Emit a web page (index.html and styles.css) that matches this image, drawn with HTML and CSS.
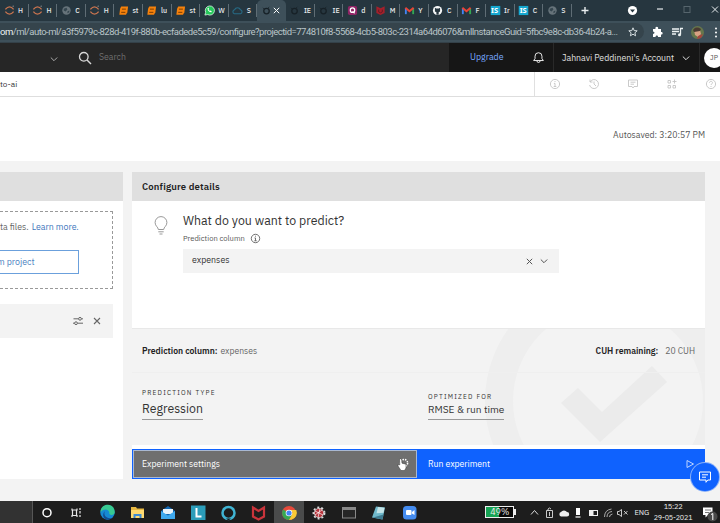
FILE: index.html
```
<!DOCTYPE html>
<html lang="en">
<head>
<meta charset="utf-8">
<title>AutoAI experiment</title>
<link rel="stylesheet" href="styles.css">
</head>
<body>
<svg class="defs" aria-hidden="true">
  <symbol id="jupyter" viewBox="0 0 12 12"><path d="M1.5 4.8Q6-.6 10.5 4.8M1.5 7.2Q6 12.6 10.5 7.2" fill="none" stroke="#c9744f" stroke-width="1.5"/><circle cx="10" cy="1.3" r=".7" fill="#999"/></symbol>
  <symbol id="globe" viewBox="0 0 12 12"><circle cx="6" cy="6" r="4.6" fill="#66737a"/><path d="M3 4l3-1 1 2-2 2-2-1zM7 7l2-1v2L7 9z" fill="#35464f"/></symbol>
  <symbol id="sheet" viewBox="0 0 12 12"><path d="M3.5 1.5h7.500l-.8 6.500-1.500 2.500H1.500L2.300 4z" fill="#f5810b"/><path d="M4.300 4.500h4.300M3.500 8h4.500" stroke="#713800" stroke-width="1"/></symbol>
  <symbol id="whatsapp" viewBox="0 0 12 12"><path d="M1 11l.8-3A5 5 0 1 1 4 10.4z" fill="#25c85b" stroke="#e7fff0" stroke-width=".8"/><path d="M4 3.4c-.8 2 2 5 4.1 4.4l.3-1-1.3-.7-.8.5L5 5l.4-.8L5 3z" fill="#fff"/></symbol>
  <symbol id="cloud" viewBox="0 0 12 12"><path d="M2.5 9.5a2.3 2.3 0 0 1 .3-4.4 3.5 3.5 0 0 1 6.4 0 2.3 2.3 0 0 1 .2 4.4z" fill="none" stroke="#276b86" stroke-width="1.2"/></symbol>
  <symbol id="dark" viewBox="0 0 12 12"><circle cx="6" cy="6.6" r="3" fill="none" stroke="#172127" stroke-width="1.4"/><path d="M2 3l1 1M9 2l-1 1" stroke="#172127"/></symbol>
  <symbol id="quora" viewBox="0 0 12 12"><rect x="1" y="1" width="10" height="10" rx="2" fill="#8f2465"/><circle cx="6" cy="5.6" r="2.4" fill="none" stroke="#fff" stroke-width="1.4"/><path d="M6 7l2.3 2" stroke="#fff" stroke-width="1.2"/></symbol>
  <symbol id="shield" viewBox="0 0 12 12"><path d="M1.5 1.3L6 3.6l4.5-2.3v7.3L6 11 1.5 8.600z" fill="#a3202b"/><path d="M4 5v2.500l2 1 2-1V5" fill="none" stroke="#5f1a22"/></symbol>
  <symbol id="gmail" viewBox="0 0 12 12"><path d="M2 10V3.500" stroke="#4285f4" stroke-width="2"/><path d="M10 10V3.500" stroke="#34a853" stroke-width="2"/><path d="M1.5 3L6 6.800 10.500 3" fill="none" stroke="#ea4335" stroke-width="2.200"/></symbol>
  <symbol id="github" viewBox="0 0 12 12"><circle cx="6" cy="6" r="5" fill="#f5f7f8"/><path d="M3.200 3l1.300.7h3L8.800 3v4L7.300 8v2.700H4.800V8L3.200 7z" fill="#26363f"/></symbol>
  <symbol id="is" viewBox="0 0 12 12"><rect x=".8" y="1" width="10.400" height="10" fill="#16a8d0"/></symbol>
  <symbol id="chev" viewBox="0 0 10 10"><path d="M1.800 3.500L5 6.700l3.200-3.200" fill="none" stroke="currentColor" stroke-width="1"/></symbol>
  <symbol id="x" viewBox="0 0 10 10"><path d="M2 2l6 6M8 2L2 8" fill="none" stroke="currentColor" stroke-width="1.100"/></symbol>
  <symbol id="info" viewBox="0 0 12 12"><circle cx="6" cy="6" r="4.600" fill="none" stroke="currentColor" stroke-width=".9"/><path d="M6 3v1M4.900 5.400H6v3M4.700 8.500h2.600" fill="none" stroke="currentColor" stroke-width=".9"/></symbol>
</svg>

<div class="tabs">
  <div class="tab"><svg><use href="#jupyter"/></svg><b>H</b></div>
  <div class="tab"><svg><use href="#jupyter"/></svg><b>H</b></div>
  <div class="tab"><svg><use href="#globe"/></svg><b>C</b></div>
  <div class="tab"><svg><use href="#jupyter"/></svg><b>H</b></div>
  <div class="tab"><svg><use href="#sheet"/></svg><b>st</b></div>
  <div class="tab"><svg><use href="#sheet"/></svg><b>lu</b></div>
  <div class="tab"><svg><use href="#sheet"/></svg><b>st</b></div>
  <div class="tab"><svg><use href="#whatsapp"/></svg><b>W</b></div>
  <div class="tab"><svg><use href="#cloud"/></svg><b>S</b></div>
  <div class="tab active"><svg><use href="#dark"/></svg><svg class="tab-x"><use href="#x"/></svg></div>
  <div class="tab"><svg><use href="#dark"/></svg><b>IE</b></div>
  <div class="tab"><svg><use href="#dark"/></svg><b>IE</b></div>
  <div class="tab"><svg><use href="#quora"/></svg><b>d</b></div>
  <div class="tab"><svg><use href="#shield"/></svg><b>M</b></div>
  <div class="tab"><svg><use href="#gmail"/></svg><b>Y</b></div>
  <div class="tab"><svg><use href="#github"/></svg><b>C</b></div>
  <div class="tab"><svg><use href="#gmail"/></svg><b>F</b></div>
  <div class="tab is"><svg><use href="#is"/></svg><i>IS</i><b>Ir</b></div>
  <div class="tab is"><svg><use href="#is"/></svg><i>IS</i><b>C</b></div>
  <div class="tab"><svg><use href="#globe"/></svg><b>S</b></div>
  <svg class="winctl" viewBox="0 0 148 20">
    <path d="M9.500 10.500h7M13 7v7" stroke="#e8edef" stroke-width="1.400"/>
    <circle cx="60.500" cy="10.500" r="4.600" fill="#fff"/><path d="M58 9.500h5l-2.500 3z" fill="#26363f"/>
    <path d="M85 9h6" stroke="#e8edef" stroke-width="1.200"/>
    <rect x="112" y="6.500" width="6" height="6" fill="none" stroke="#56656d"/>
    <path d="M140 6.500l6 6M146 6.500l-6 6" stroke="#e8edef"/>
  </svg>
</div>

<div class="toolbar">
  <div class="omnibox">
    <span class="url"><em>om</em>/ml/auto-ml/a3f5979c-828d-419f-880b-ecfadede5c59/configure?projectid=774810f8-5568-4cb5-803c-2314a64d6076&amp;mlInstanceGuid=5fbc9e8c-db36-4b24-a...</span>
    <svg class="star" viewBox="0 0 12 12"><path d="M6 1.800l1.200 2.800 3 .2-2.300 2 .7 3L6 8.200 3.400 9.800l.7-3-2.300-2 3-.2z" fill="none" stroke="#d5dde0"/></svg>
  </div>
  <svg class="exts" viewBox="0 0 76 20">
    <path d="M9 7h2.500c-.8-3 3.400-3 2.600 0H17v3c2.200-.6 2.200 3 0 2.500V15H14c.4-2-2.800-2-2.400 0H9v-3c2-.2 2-2.300 0-2.400z" fill="#fff"/>
    <path d="M28 7h7M28 9.500h7M28 12h4M36.500 6v6.500M36 6.500h3" stroke="#eef2f3" stroke-width="1.300"/><circle cx="35.500" cy="12.700" r="1.500" fill="#eef2f3"/>
    <circle cx="53.500" cy="10.500" r="6.500" fill="#66774c"/><path d="M50 8q3-5 6 0l1 4-3 3-3-2z" fill="#d8a183"/><path d="M49 8q3-5 8-1l-1 2-6 1z" fill="#493a32"/><path d="M54 14l5-2-2 4-4 1z" fill="#a7443d"/>
    <g fill="#fff"><circle cx="72" cy="6.500" r="1"/><circle cx="72" cy="10.500" r="1"/><circle cx="72" cy="14.500" r="1"/></g>
  </svg>
</div>

<header class="shell">
  <div class="shell-left">
    <svg class="ic10 shell-chev"><use href="#chev"/></svg>
    <svg class="mag" viewBox="0 0 14 14"><circle cx="5.800" cy="5.800" r="4.300" fill="none" stroke="#d8d8d8" stroke-width="1.300"/><path d="M9 9l4 4" stroke="#d8d8d8" stroke-width="1.400"/></svg>
    <span class="search">Search</span>
  </div>
  <div class="shell-right">
    <span class="upgrade">Upgrade</span>
    <svg class="bell" viewBox="0 0 12 12"><path d="M1.500 8.800L2.800 7V4.800a3.200 3.200 0 0 1 6.400 0V7l1.300 1.800zM4.600 9.200a1.400 1.400 0 0 0 2.800 0" fill="none" stroke="#eee" stroke-width=".9"/></svg>
    <div class="account"><span>Jahnavi Peddineni's Account</span><svg class="ic10"><use href="#chev"/></svg></div>
    <div class="avatar"><span>JP</span></div>
  </div>
</header>

<div class="crumbs">
  <span class="crumb">to-ai</span>
  <div class="crumb-icons">
    <svg><use href="#info"/></svg>
    <svg viewBox="0 0 12 12"><path d="M2 4a4.500 4.500 0 1 1-.4 3M2 1.500V4h2.500M6 3.500V6l2 2" fill="none" stroke="currentColor" stroke-width=".9"/></svg>
    <svg viewBox="0 0 12 12"><path d="M1.500 2h9v6.500H7L6 10 5 8.500H1.500zM3.500 4.200h5M3.500 6.200h3.500" fill="none" stroke="currentColor" stroke-width=".9"/></svg>
    <svg viewBox="0 0 12 12"><path d="M2 2.500h2.500V5H2zM2 7.500h2.500V10H2zM7 7.500h2.500V10H7zM8.500 1.500v4M6.500 3.500h4" fill="none" stroke="currentColor" stroke-width=".9"/></svg>
    <svg viewBox="0 0 12 12"><circle cx="6" cy="6" r="4.600" fill="none" stroke="currentColor" stroke-width=".9"/><path d="M4.500 4.800c0-2 3-2 3 0C7.500 6 6 5.800 6 7M6 8v1" fill="none" stroke="currentColor" stroke-width=".9"/></svg>
  </div>
</div>

<div class="saved"><span>Autosaved: 3:20:57 PM</span></div>

<main class="stage">
  <section class="source">
    <div class="card-head"></div>
    <div class="drop">
      <p><span>ta files.</span> <a>Learn more.</a></p>
      <div class="select-btn"><span>m project</span></div>
    </div>
    <div class="file">
      <svg viewBox="0 0 12 12"><path d="M1.500 3.800h5M9.500 3.800h1.500M1 8.200h1.500M5.500 8.200H11" stroke="currentColor"/><circle cx="8" cy="3.800" r="1.400" fill="none" stroke="currentColor"/><circle cx="4" cy="8.200" r="1.400" fill="none" stroke="currentColor"/></svg>
      <svg class="file-x"><use href="#x"/></svg>
    </div>
  </section>

  <section class="config">
    <div class="card-head"><h2>Configure details</h2></div>
    <div class="question">
      <svg class="bulb" viewBox="0 0 16 20"><path d="M5.300 13.500c0-2.400-3.200-3.300-3.200-7a5.900 5.900 0 0 1 11.800 0c0 3.700-3.200 4.600-3.200 7zM5.300 15.800h5.400M6.500 18h3" fill="none" stroke="#999" stroke-width="1"/></svg>
      <div class="q-body">
        <h3>What do you want to predict?</h3>
        <div class="label"><span>Prediction column</span><svg><use href="#info"/></svg></div>
        <div class="combo"><span>expenses</span><svg class="clear"><use href="#x"/></svg><svg><use href="#chev"/></svg></div>
      </div>
    </div>
    <div class="summary">
      <svg class="mark" viewBox="0 0 224 116"><circle cx="127" cy="72" r="109" fill="none" stroke="#eee" stroke-width="28"/><path d="M80 74L97 59l24 24 50-46 15 16-67 60z" fill="#ebebeb"/></svg>
      <div class="sum-row"><span><b>Prediction column:</b><i>expenses</i></span><span><b>CUH remaining:</b><i class="cuh-v">20 CUH</i></span></div>
      <div class="facts">
        <div><small>PREDICTION TYPE</small><strong class="type">Regression</strong></div>
        <div><small>OPTIMIZED FOR</small><strong class="metric">RMSE &amp; run time</strong></div>
      </div>
    </div>
    <div class="actions">
      <div class="settings"><span>Experiment settings</span>
        <svg viewBox="0 0 16 16"><circle cx="9" cy="7" r="3.600" fill="none" stroke="#fff" stroke-width="1.500" stroke-dasharray="1.500 1"/><path d="M4.500 3.500l1-.8 1 1 .5 3.500 4 1V12l-1.500 2.500H6L3 10V8.500l1.800.3z" fill="#fff" stroke="#333" stroke-width=".5"/></svg>
      </div>
      <div class="run"><span>Run experiment</span><svg viewBox="0 0 10 10"><path d="M2 1.500v7L8.500 5z" fill="none" stroke="#cfe0ff" stroke-width=".9"/></svg></div>
    </div>
  </section>
  <div class="chat"><svg viewBox="0 0 14 14"><path d="M1.500 2h11v8H9.800L8 12.300V10H1.500zM4 4.800h6M4 7.200h4" fill="none" stroke="#fff" stroke-width="1"/></svg></div>
</main>

<footer class="taskbar">
  <svg class="apps" viewBox="0 0 480 22">
    <rect width="32.500" height="22" fill="#323232"/><path d="M32.500 0v22" stroke="#777" stroke-width=".6"/>
    <circle cx="47" cy="11.700" r="4" fill="none" stroke="#fff" stroke-width="1.500"/>
    <path d="M72 7.500v1.500h5V7.500M72 16v-1.500h5V16M72.500 9v5M76.500 9v5M80 7v2M80 10v2.500M80 14v2" fill="none" stroke="#e8e8e8" stroke-width="1.200"/>
    <circle cx="107.500" cy="11.500" r="7.200" fill="#1689d2"/><path d="M100.500 11c0-9 14-10 14.200 0 0 4-5 3.500-5.500 1.500 1-4-5-6-8.700-1.500z" fill="#38c991"/><path d="M105 10c-2 4 1 8 7 7-6 5-12-2-7-7z" fill="#124d91"/>
    <path d="M131 6h5l1 1.500h7V17h-13z" fill="#e9b943"/><path d="M131 9h13v8h-13z" fill="#ffda71"/><path d="M133.500 17v-4h8v4h-2v-2h-4v2z" fill="#3e8bd3"/>
    <path d="M161 10l7-5 7 5v8h-14z" fill="#1267b2"/><path d="M163 8h10v5h-10z" fill="#e9f3fa"/><path d="M161 10l7 4.500 7-4.500v8h-14z" fill="#3fa9ee"/>
    <rect x="191" y="4.500" width="14.500" height="14.500" fill="#2b9dba"/><path d="M196.500 7v8.500h5" fill="none" stroke="#fff" stroke-width="2"/>
    <circle cx="228.500" cy="12" r="6" fill="none" stroke="#40b4d3" stroke-width="2.500"/><path d="M226 17.500l2.500 2 2.500-2z" fill="#1d1d1d"/>
    <path d="M253 6.500l5.500 3.500 5.500-3.500v9l-5.500 3-5.500-3z" fill="none" stroke="#c9343b" stroke-width="2.200"/>
    <rect x="274" width="30" height="22" fill="#4a4b4b"/>
    <circle cx="289" cy="12" r="7" fill="#e64a3b"/><path d="M289 12l-6-3.500A7 7 0 0 0 289 19l3-5z" fill="#38a853"/><path d="M289 12h7a7 7 0 0 1-7 7l3-5z" fill="#f9c935"/><path d="M290 9h6.300a7 7 0 0 1-5 9.700L293 12z" fill="#f9c935"/><circle cx="289" cy="12" r="3.300" fill="#fff"/><circle cx="289" cy="12" r="2.600" fill="#4285f4"/>
    <circle cx="319" cy="12" r="5.600" fill="none" stroke="#ddd" stroke-width="1.700" stroke-dasharray="2 2"/><circle cx="319" cy="12" r="4.600" fill="#b7333b" stroke="#eee" stroke-width=".7"/><path d="M315 10l8 4M320 7.500l-2 9M315 14l7-5" stroke="#fff" stroke-width=".7"/>
    <rect x="342.500" y="6.500" width="13" height="10.500" fill="#262626" stroke="#888"/><path d="M343 8h12" stroke="#aaa" stroke-width="1.500"/>
    <path d="M376 5.500l9 1-2.500 12-10.500-2z" fill="#70b9cb"/><path d="M378 6l6.500.7-1 5-7 .5z" fill="#c4e4e7"/><path d="M373 16.500l9.500 2 1-5z" fill="#3e7b91"/>
    <rect x="403" y="5" width="13.500" height="13.500" rx="3.500" fill="#458cf0"/><rect x="406" y="9" width="5.500" height="5" rx="1" fill="#fff"/><path d="M412 11l2.500-2v5L412 12.500z" fill="#fff"/>
  </svg>
  <div class="battery"><span>49%</span></div>
  <svg class="tray" viewBox="0 0 105 22">
    <path d="M2 13.500l3.500-4 3.500 4" fill="none" stroke="#ddd"/>
    <path d="M17.500 9.500h6v7h-6zM19 9.500V8q1.500-2 3 0M20.500 11v4" fill="none" stroke="#ddd" stroke-width=".9"/>
    <path d="M32 15.500a2.300 2.300 0 0 1 0-4.400 3.500 3.500 0 0 1 6 0 2.200 2.200 0 0 1 0 4.400z" fill="#eee"/>
    <path d="M47 7h4v7h-4z" fill="#fff"/><path d="M46.500 16h5" stroke="#fff" stroke-width="1.200"/>
    <rect x="60.500" y="9.500" width="8" height="5" fill="none" stroke="#eee"/><path d="M60 9h4.500v6H60z" fill="#eee"/>
    <path d="M75.500 16q0-7 7-8M78 16q0-5 5-5.500M80.500 16q0-2.500 3-3" fill="none" stroke="#aaa"/>
    <path d="M88.500 10.500h1.500l2.500-2v7L90 13.500h-1.500zM95 10l3.500 3.500M98.500 10L95 13.500" fill="none" stroke="#ddd" stroke-width=".9"/>
  </svg>
  <span class="lang">ENG</span>
  <div class="clock"><span>15:22</span><span class="date">29-05-2021</span></div>
  <svg class="notes" viewBox="0 0 18 22"><path d="M1 6.500h9.500V14H6l-2.500 2.500V14H1z" fill="#fff"/><path d="M3 9h6M3 11.500h4" stroke="#777"/><circle cx="10.500" cy="15.500" r="5" fill="#494949"/><path d="M9 13.500l1.800-1V19" fill="none" stroke="#fff"/></svg>
</footer>
</body>
</html>
```
FILE: styles.css
```
* { box-sizing: border-box; margin: 0; padding: 0; }
body {
  width: 720px; height: 523px; overflow: hidden;
  display: flex; flex-direction: column;
  background: #fff; color: #333;
  font-family: "IBM Plex Sans", "Noto Sans", sans-serif; font-size: 9px; line-height: 12px;
}
i, em { font-style: normal; }
svg { display: block; flex: none; }
span, b, small, strong, h2, h3 { white-space: nowrap; }
.defs { position: absolute; width: 0; height: 0; }
.ic10 { width: 10px; height: 10px; }

.tabs { flex: none; height: 21px; display: flex; background: #26363f; overflow: hidden; }
.tab { position: relative; width: 28.6px; flex: none; display: flex; align-items: center; gap: 3.500px; padding-left: 3.500px; border-right: 1px solid #5f6d75; border-image: linear-gradient(transparent 20%, #5f6d75 20%, #5f6d75 78%, transparent 78%) 1; border-width: 0 1px 0 0; }
.tab svg { width: 11px; height: 11px; }
.tab b { color: #e6eaec; font-size: 7px; font-weight: 500; }
.tab.active { background: #3e505a; border-radius: 5px 5px 0 0; border-image: none; border-color: transparent; }
.tab.active .tab-x { width: 9px; height: 9px; margin-left: -3.500px; color: #fff; }
.tab.is i { position: absolute; left: 5px; top: 5px; color: #fff; font: bold 7.500px/11px "Noto Sans", sans-serif; }
.winctl { width: 148px; height: 20px; }

.toolbar { flex: none; height: 22px; display: flex; align-items: center; background: #3e505a; border-bottom: 1px solid #344149; }
.omnibox { flex: none; width: 644px; height: 17px; display: flex; align-items: center; background: #35444c; border-radius: 0 9px 9px 0; }
.url { flex: none; width: 627px; color: #bac4c8; font-family: Roboto, sans-serif; font-size: 9.500px; letter-spacing: -.5px; }
.url em { color: #eef2f3; }
.star { width: 12px; height: 12px; }
.exts { width: 76px; height: 20px; }

.shell { flex: none; height: 29px; display: flex; background: #262626; color: #e0e0e0; }
.shell-left { flex: none; width: 449px; display: flex; align-items: center; }
.shell-chev { margin: 2px 0 0 49px; color: #aaa; }
.mag { width: 14px; height: 14px; margin-left: 19px; }
.search { margin: -1px 0 0 7px; color: #6f6f6f; font-size: 8.700px; }
.shell-right { flex: none; width: 271px; overflow: hidden; display: flex; align-items: center; background: #161616; }
.upgrade { flex: none; width: 62px; margin: -1px 0 0 21px; color: #78a9ff; font-size: 8.800px; }
.bell { width: 13px; height: 13px; }
.account { flex: none; width: 147px; height: 29px; margin-left: 8px; padding-left: 8px; display: flex; align-items: center; gap: 6px; border: solid #292929; border-width: 0 1px; font-size: 8.750px; }
.account span { width: 113px; }
.avatar { flex: none; width: 20px; height: 20px; margin-left: 4px; border-radius: 50%; background: #fff; color: #555; font-size: 7px; line-height: 20px; text-align: center; }

.crumbs { flex: none; height: 25px; display: flex; align-items: center; justify-content: space-between; border-bottom: 1px solid #dedede; }
.crumb { font-size: 8.200px; }
.crumb-icons { width: 186px; height: 24px; padding-left: 14px; display: flex; align-items: center; gap: 27px; border-left: 1px solid #e0e0e0; color: #c4c4c4; }
.crumb-icons svg { width: 12px; height: 12px; }

.saved { flex: none; height: 64px; padding: 32px 15px 0 0; text-align: right; color: #555; font-size: 8.750px; }

.stage { position: relative; flex: none; height: 340px; padding-top: 11px; display: flex; gap: 9px; background: #f3f3f3; }
.card-head { height: 29px; display: flex; align-items: center; padding-left: 10px; background: #dfdfdf; }
.source { width: 123px; height: 307px; background: #fff; }
.drop { width: 113px; height: 78px; margin-top: 10px; padding-top: 9px; border: dashed #999; border-width: 1px 1px 1px 0; }
.drop p { display: flex; gap: 3px; color: #666; font-size: 8.800px; }
.drop a { color: #3f78bd; white-space: nowrap; }
.select-btn { width: 79px; height: 24px; margin-top: 17px; display: flex; align-items: center; border: 1px solid #6ba0dc; border-left: 0; color: #4d83c2; font-size: 8.800px; }
.select-btn span { margin: -1px 0 0 -3px; }
.file { width: 113px; height: 34px; margin-top: 15px; padding-left: 72px; display: flex; align-items: center; gap: 8px; background: #f3f3f3; color: #666; }
.file svg { width: 12px; height: 12px; }
.file .file-x { width: 10px; height: 10px; }

.config { width: 573px; height: 307px; background: #fff; }
h2 { font-size: 9.500px; letter-spacing: .17px; font-weight: 600; color: #222; }
.question { height: 128px; padding: 13px 0 0 21px; display: flex; border-bottom: 1px solid #e8e8e8; }
.bulb { width: 16px; height: 20px; margin-top: 2px; }
.q-body { margin-left: 14px; }
h3 { height: 14px; line-height: 12px; font-size: 12.350px; font-weight: 400; color: #333; }
.label { height: 12px; margin-top: 4px; display: flex; align-items: center; gap: 4px; font-size: 7.600px; color: #555; }
.label span { width: 63px; }
.label svg { width: 11px; height: 11px; }
.combo { width: 376px; height: 24px; margin-top: 5px; padding: 0 10px 0 9px; display: flex; align-items: center; gap: 5px; background: #f3f3f3; font-size: 8.800px; }
.combo span { flex: 1; margin-top: -2px; }
.combo svg { width: 10px; height: 10px; color: #555; }
.combo .clear { width: 9px; height: 9px; }
.summary { position: relative; height: 116px; background: #f3f3f3; overflow: hidden; }
.mark { position: absolute; left: 349px; top: 0; width: 224px; height: 116px; }
.sum-row { position: relative; height: 44px; padding: 0 10px; display: flex; align-items: center; justify-content: space-between; border-bottom: 1px solid #efefef; font-size: 8.650px; }
.sum-row b { font-weight: 600; color: #222; }
.sum-row span { display: flex; gap: 3px; }
.sum-row i { color: #666; }
.sum-row .cuh-v { margin-left: 4px; }
.facts { position: relative; padding: 15px 0 0 10px; display: grid; grid-template-columns: 286px 1fr; align-items: end; }
.facts div { display: flex; flex-direction: column; align-items: flex-start; }
small { height: 9px; line-height: 9px; font-size: 6.500px; letter-spacing: 1.230px; }
strong { font-weight: 400; border-bottom: 1px solid #999; }
.type { height: 22px; line-height: 20px; font-size: 12.300px; margin-top: 1px; }
.metric { height: 19px; line-height: 18px; font-size: 10.150px; }
.actions { height: 30px; margin-top: 4px; display: flex; background: #0f62fe; color: #fff; font-size: 8.700px; }
.settings { width: 286px; padding: 0 6px 0 9px; display: flex; align-items: center; justify-content: space-between; background: #6f6f6f; border: 1px solid #0f62fe; outline: 1px solid #a9b8d2; outline-offset: -2px; }
.settings svg { width: 16px; height: 16px; }
.run { flex: 1; padding: 0 10px; display: flex; align-items: center; justify-content: space-between; }
.run svg { width: 10px; height: 10px; }
.chat { position: absolute; left: 691px; top: 302px; width: 28px; height: 28px; border-radius: 50%; background: #0f62fe; display: flex; align-items: center; justify-content: center; box-shadow: 0 0 0 1px #8cb1f8; }
.chat svg { width: 14px; height: 14px; }

.taskbar { flex: none; height: 22px; display: flex; align-items: center; background: #1d1d1d; color: #eee; font-size: 8px; }
.apps { width: 480px; height: 22px; }
.battery { position: relative; width: 30px; height: 12px; margin-left: 5px; border: 1px solid #eee; background: linear-gradient(90deg, #17a354 50%, #080808 50%); font-size: 9px; line-height: 10px; text-align: center; }
.battery::after { content: ""; position: absolute; right: -3px; top: 2px; width: 2px; height: 6px; background: #eee; }
.tray { width: 105px; height: 22px; margin-left: 15px; }
.lang { width: 20px; font-size: 7.500px; }
.clock { width: 38px; height: 22px; display: flex; flex-direction: column; align-items: center; line-height: 11px; font-size: 7.500px; letter-spacing: -.3px; }
.date { font-size: 7.200px; letter-spacing: -.15px; }
.notes { width: 18px; height: 22px; margin-left: 10px; }
```
